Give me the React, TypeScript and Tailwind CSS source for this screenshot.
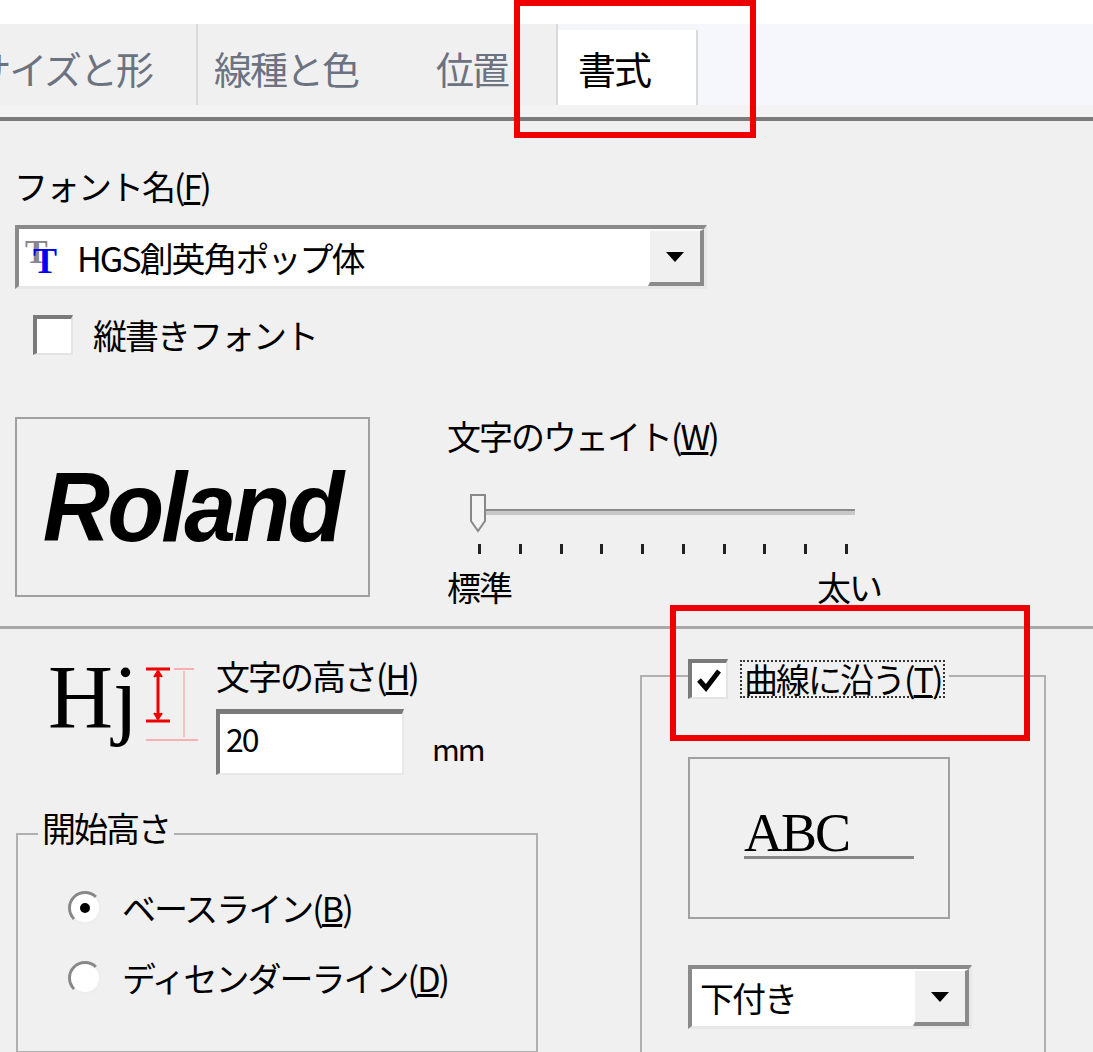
import React from "react";

const F = { fontFamily: '"Noto Sans CJK JP", "Noto Sans", sans-serif' };

function Arrow() {
  return (
    <svg width="22" height="14" viewBox="0 0 22 14"><path d="M2 2 L20 2 L11 12 Z" fill="#000" /></svg>
  );
}

function Combo({ w, children }: { w: string; children: React.ReactNode }) {
  return (
    <div className={`${w} h-[64px] bg-white border-t-[4px] border-l-[4px] border-[#8a8a8a] border-b-[3px] border-r-[3px] border-b-[#e8e8e8] border-r-[#e8e8e8] flex items-stretch`}>
      <div className="flex-1 flex items-center">{children}</div>
      <div className="w-[56px] bg-[#f0f0f0] border-b-[4px] border-r-[4px] border-[#8a8a8a] border-l-2 border-t-2 border-l-white border-t-white flex items-center justify-center">
        <Arrow />
      </div>
    </div>
  );
}

function Check({ checked }: { checked?: boolean }) {
  return (
    <div className="w-[40px] h-[40px] bg-white border-t-[4px] border-l-[4px] border-[#7a7a7a] border-b-2 border-r-2 border-b-[#e4e4e4] border-r-[#e4e4e4] flex items-center justify-center">
      {checked && (
        <svg width="26" height="26" viewBox="0 0 26 26"><path d="M3 13 L10 21 L23 4" stroke="#000" strokeWidth="5" fill="none" /></svg>
      )}
    </div>
  );
}

function Radio({ on }: { on?: boolean }) {
  return (
    <div className="w-[34px] h-[34px] rounded-full bg-white border-[3px] border-t-[#888] border-l-[#888] border-b-[#eee] border-r-[#eee] flex items-center justify-center">
      {on && <div className="w-[10px] h-[10px] rounded-full bg-black" />}
    </div>
  );
}

export default function App() {
  return (
    <div className="relative w-[1093px] h-[1052px] overflow-hidden bg-[#f0f0f0] text-black text-[34px] leading-none tracking-[-2px] whitespace-nowrap" style={F}>
      {/* tab strip */}
      <div className="h-[24px] bg-white" />
      <div className="h-[81px] bg-[#f5f6fa] flex items-stretch">
        <div className="w-[198px] border-r-2 border-[#dadada] bg-[#f0f0f0] flex items-center justify-end pr-[44px] text-[#6b7280] text-[38px] pt-[6px] overflow-hidden">サイズと形</div>
        <div className="w-[222px] bg-[#f0f0f0] flex items-center pl-[16px] text-[#6b7280] text-[38px] pt-[6px]">線種と色</div>
        <div className="w-[138px] bg-[#f0f0f0] border-r-2 border-[#dadada] flex items-center pl-[16px] text-[#6b7280] text-[38px] pt-[6px]">位置</div>
        <div className="w-[140px] mt-[6px] bg-white border-r-2 border-[#dadada] flex items-center pl-[20px] text-[38px]">書式</div>
        <div className="flex-1 bg-[#f5f7fc]" />
      </div>
      <div className="h-[12px] bg-[#f3f3f3]" />
      <div className="h-[4px] bg-[#7a7a7a]" />

      {/* font */}
      <div className="pl-[14px] pt-[48px]">フォント名(<span className="underline">F</span>)</div>
      <div className="pl-[15px] pt-[22px]">
        <Combo w="w-[692px]">
          <div className="relative w-[54px] h-[50px] ml-[4px]">
            <span className="absolute left-[2px] top-[2px] text-[34px] font-bold text-[#888]" style={{ fontFamily: '"Liberation Serif", serif' }}>T</span>
            <span className="absolute left-[10px] top-[10px] text-[36px] font-bold text-[#0000ee]" style={{ fontFamily: '"Liberation Serif", serif' }}>T</span>
          </div>
          <span>HGS創英角ポップ体</span>
        </Combo>
      </div>
      <div className="pl-[33px] pt-[26px] flex items-center gap-[20px]">
        <Check />
        <span>縦書きフォント</span>
      </div>

      {/* weight */}
      <div className="flex pl-[15px] pt-[62px]">
        <div className="w-[355px] h-[180px] border-2 border-[#a0a0a0] flex items-center justify-center">
          <span className="text-[98px] font-black italic tracking-[-3px] scale-x-[0.95]" style={{ fontFamily: '"Liberation Sans", Arial, sans-serif' }}>Roland</span>
        </div>
        <div className="ml-[77px] pt-[2px] w-[420px]">
          <div>文字のウェイト(<span className="underline">W</span>)</div>
          <div className="relative h-[70px] mt-[26px]">
            <div className="absolute left-[30px] top-[30px] w-[378px] h-[6px] bg-[#c8c8c8] border-t-2 border-[#8a8a8a]" />
            <svg className="absolute left-[22px] top-[14px]" width="20" height="40" viewBox="0 0 20 40">
              <path d="M2 2 H16 V28 L9 38 L2 28 Z" fill="#f4f4f4" stroke="#888" strokeWidth="2" />
            </svg>
          </div>
          <div className="flex justify-between w-[370px] ml-[31px] -mt-[5px]">
            {Array.from({ length: 10 }).map((_, i) => (
              <div key={i} className="w-[3px] h-[10px] bg-[#222]" />
            ))}
          </div>
          <div className="flex justify-between w-[440px] mt-[16px]">
            <span>標準</span>
            <span className="mr-[6px]">太い</span>
          </div>
        </div>
      </div>

      <div className="mt-[22px] h-[3px] bg-[#a8a8a8]" />

      {/* bottom */}
      <div className="flex">
        <div className="w-[640px]">
          <div className="flex pl-[48px] pt-[24px]">
            <div className="flex items-start">
              <span className="text-[90px] leading-none tracking-[0px]" style={{ fontFamily: '"Liberation Serif", serif' }}>Hj</span>
              <svg className="ml-[6px] mt-[12px]" width="60" height="80" viewBox="0 0 60 80">
                <line x1="2" y1="4" x2="26" y2="4" stroke="#ee0000" strokeWidth="3" />
                <line x1="2" y1="56" x2="26" y2="56" stroke="#ee0000" strokeWidth="3" />
                <line x1="14" y1="6" x2="14" y2="54" stroke="#ee0000" strokeWidth="3" />
                <path d="M10 12 L14 6 L18 12 M10 48 L14 54 L18 48" fill="#ee0000" stroke="#ee0000" strokeWidth="2" />
                <line x1="2" y1="75" x2="54" y2="75" stroke="#f7b0b0" strokeWidth="2" />
                <line x1="30" y1="4" x2="50" y2="4" stroke="#f7b0b0" strokeWidth="2" />
                <line x1="40" y1="6" x2="40" y2="72" stroke="#f7b0b0" strokeWidth="1.5" />
              </svg>
            </div>
            <div className="ml-[12px] pt-[6px]">
              <div>文字の高さ(<span className="underline">H</span>)</div>
              <div className="flex items-end mt-[16px]">
                <div className="w-[188px] h-[66px] bg-white border-t-[5px] border-l-[4px] border-[#7a7a7a] border-b-2 border-r-2 border-b-[#e8e8e8] border-r-[#e8e8e8] pl-[6px] pt-[8px] text-[32px]">20</div>
                <span className="ml-[28px] mb-[12px] text-[30px]">mm</span>
              </div>
            </div>
          </div>
          <div className="ml-[16px] mt-[58px] w-[522px] h-[220px] border-2 border-[#b0b0b0] relative">
            <span className="absolute left-[20px] -top-[24px] bg-[#f0f0f0] px-[4px]">開始高さ</span>
            <div className="pl-[50px] pt-[56px] flex items-center gap-[20px]">
              <Radio on />
              <span>ベースライン(<span className="underline">B</span>)</span>
            </div>
            <div className="pl-[50px] pt-[36px] flex items-center gap-[20px]">
              <Radio />
              <span>ディセンダーライン(<span className="underline">D</span>)</span>
            </div>
          </div>
        </div>
        <div className="mt-[46px] w-[406px] h-[400px] border-2 border-[#b0b0b0] relative">
          <div className="absolute left-[46px] -top-[18px] flex items-center gap-[12px] bg-[#f0f0f0] pr-[4px]">
            <Check checked />
            <span className="border-2 border-dotted border-[#333] px-[2px]">曲線に沿う(<span className="underline">T</span>)</span>
          </div>
          <div className="ml-[46px] mt-[80px] w-[262px] h-[162px] border-2 border-[#a0a0a0] flex items-center justify-center">
            <div className="flex flex-col items-start mt-[-12px] ml-[20px]">
              <span className="text-[54px] leading-none tracking-[-2px]" style={{ fontFamily: '"Liberation Serif", serif' }}>ABC</span>
              <div className="w-[170px] h-[3px] bg-[#888] mt-[-4px]" />
            </div>
          </div>
          <div className="ml-[46px] mt-[46px]">
            <Combo w="w-[284px]"><span className="ml-[8px]">下付き</span></Combo>
          </div>
        </div>
      </div>

      {/* red highlight overlays */}
      <div className="absolute left-[514px] top-0 w-[242px] h-[138px] border-[6px] border-[#ee0000]" />
      <div className="absolute left-[670px] top-[605px] w-[360px] h-[136px] border-[6px] border-[#ee0000]" />
    </div>
  );
}
